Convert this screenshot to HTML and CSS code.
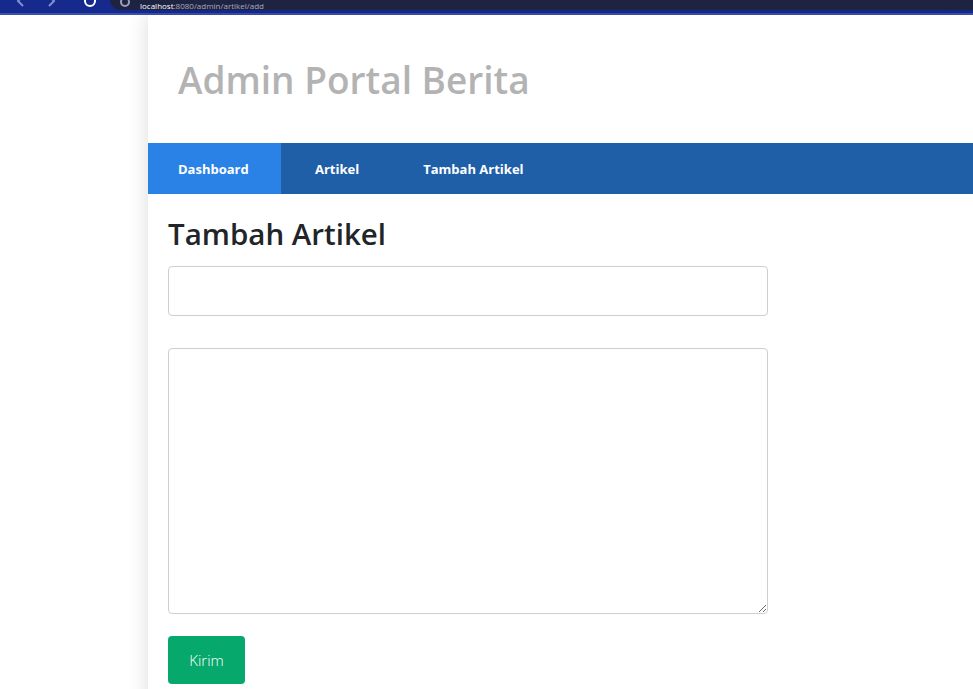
FILE: index.html
```html
<!DOCTYPE html>
<html lang="id">
<head>
<meta charset="utf-8">
<title>Admin Portal Berita</title>
<link rel="stylesheet" href="styles.css">
</head>
<body>
<div class="chrome">
  <div class="chrome-nav">
    <svg class="chrome-arrow" width="10" height="10" viewBox="0 0 10 10"><path d="M7 -4 L2 1 L7 6" fill="none" stroke="#7f8fd0" stroke-width="2"/></svg>
    <svg class="chrome-arrow" width="10" height="10" viewBox="0 0 10 10"><path d="M3 -4 L8 1 L3 6" fill="none" stroke="#7f8fd0" stroke-width="2"/></svg>
    <span class="chrome-reload"></span>
  </div>
  <div class="chrome-url"><span class="url-icon"></span><span class="url-host">localhost</span><span class="url-path">:8080/admin/artikel/add</span></div>
</div>
<div class="page">
  <div class="container">
    <header class="header">
      <h1 class="site-title">Admin Portal Berita</h1>
    </header>
    <nav class="nav">
      <a class="nav-item active" href="#">Dashboard</a>
      <a class="nav-item" href="#">Artikel</a>
      <a class="nav-item" href="#">Tambah Artikel</a>
    </nav>
    <main class="content">
      <h2 class="page-title">Tambah Artikel</h2>
      <form class="form">
        <input class="field" type="text">
        <textarea class="field area"></textarea>
        <button class="btn" type="button">Kirim</button>
      </form>
    </main>
  </div>
</div>
</body>
</html>
```
FILE: styles.css
```css
html, body {
  margin: 0;
  padding: 0;
  background: #ffffff;
  font-family: "Open Sans", "Noto Sans", "Liberation Sans", sans-serif;
  overflow: hidden;
}
.chrome {
  height: 13px;
  background: #152a8c;
  border-bottom: 2px solid #3b4fae;
  display: flex;
  align-items: flex-start;
  overflow: hidden;
}
.chrome-nav {
  width: 110px;
  box-sizing: border-box;
  display: flex;
  gap: 20px;
  padding-left: 16px;
  align-items: flex-start;
}
.chrome-arrow {
  display: block;
}
.chrome-reload {
  width: 12px;
  height: 12px;
  box-sizing: border-box;
  border: 2px solid #ffffff;
  border-radius: 50%;
  margin-top: -5px;
  margin-left: 8px;
}
.chrome-url {
  flex: 1;
  height: 10px;
  background: #1e2342;
  border-bottom-left-radius: 10px;
  display: flex;
  align-items: center;
  padding-left: 10px;
  font-size: 8px;
  line-height: 9px;
  color: #c9cbd8;
  overflow: hidden;
}
.url-icon {
  width: 10px;
  height: 10px;
  border: 2px solid #9aa0b8;
  border-radius: 50%;
  margin-right: 10px;
  margin-top: -6px;
  flex: none;
  box-sizing: border-box;
}
.url-host { color: #ffffff; }
.url-path { color: #a8abbf; }
.page {
  padding-left: 148px;
}
.container {
  background: #ffffff;
  box-shadow: -2px 0 18px rgba(0, 0, 0, 0.12);
  min-height: 700px;
}
.header {
  height: 128px;
  display: flex;
  align-items: center;
  padding-left: 30px;
}
.site-title {
  margin: 0;
  font-size: 37px;
  font-weight: 600;
  color: #b3b3b3;
  letter-spacing: 0;
}
.nav {
  display: flex;
  height: 51px;
  background: #1f5fa8;
}
.nav-item {
  display: flex;
  align-items: center;
  padding: 0 30px;
  color: #ffffff;
  font-size: 13px;
  font-weight: 700;
  text-decoration: none;
  margin-right: 4px;
}
.nav-item.active {
  background: #2b82e6;
  width: 73px;
}
.content {
  padding: 20px 20px;
}
.page-title {
  margin: 0 0 12px;
  font-size: 29.5px;
  font-weight: 600;
  color: #212529;
  line-height: 40px;
}
.form {
  display: flex;
  flex-direction: column;
  align-items: flex-start;
}
.field {
  width: 600px;
  height: 50px;
  box-sizing: border-box;
  border: 1px solid #cfcfcf;
  border-radius: 4px;
  margin: 0 0 32px;
  font-family: inherit;
  font-size: 16px;
  background: #ffffff;
}
.field.area {
  height: 266px;
  margin-bottom: 22px;
  resize: vertical;
}
.btn {
  width: 77px;
  height: 48px;
  border: none;
  border-radius: 4px;
  background: #06a86c;
  color: #ffffff;
  font-family: inherit;
  font-size: 15px;
  font-weight: 300;
}
```
